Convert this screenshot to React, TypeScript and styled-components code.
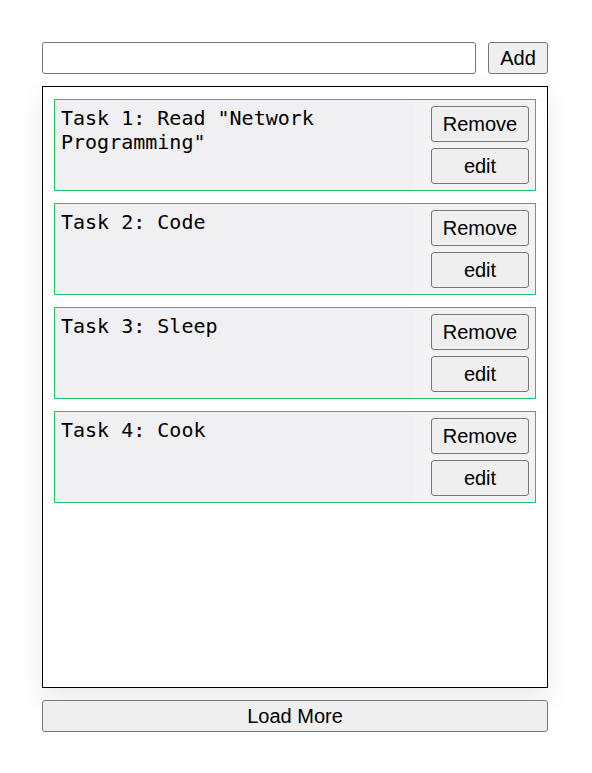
import React, { useState } from "react";
import styled, { createGlobalStyle } from "styled-components";

const GlobalStyle = createGlobalStyle`
  body {
    margin: 0;
    background: #ffffff;
    font-family: "Liberation Sans", Arial, sans-serif;
  }
`;

interface Task {
  id: number;
  title: string;
}

const initialTasks: Task[] = [
  { id: 1, title: 'Task 1: Read "Network Programming"' },
  { id: 2, title: "Task 2: Code" },
  { id: 3, title: "Task 3: Sleep" },
  { id: 4, title: "Task 4: Cook" },
];

const App = () => {
  const [tasks, setTasks] = useState<Task[]>(initialTasks);
  const [value, setValue] = useState("");

  const addTask = () => {
    if (!value.trim()) return;
    setTasks([...tasks, { id: Date.now(), title: value }]);
    setValue("");
  };

  return (
    <Page>
      <GlobalStyle />
      <AddRow>
        <TaskInput value={value} onChange={(e) => setValue(e.target.value)} />
        <Button $width="60px" onClick={addTask}>
          Add
        </Button>
      </AddRow>
      <ListBox>
        {tasks.map((task) => (
          <Card key={task.id}>
            <CardText>{task.title}</CardText>
            <Actions>
              <Button $width="98px" $height="36px" onClick={() => setTasks(tasks.filter((t) => t.id !== task.id))}>
                Remove
              </Button>
              <Button $width="98px" $height="36px">
                edit
              </Button>
            </Actions>
          </Card>
        ))}
      </ListBox>
      <Button $width="100%">Load More</Button>
    </Page>
  );
};

export default App;

const Page = styled.div`
  width: 506px;
  margin-left: 42px;
  padding-top: 42px;
  display: flex;
  flex-direction: column;
  gap: 12px;
`;

const AddRow = styled.div`
  display: flex;
  gap: 12px;
`;

const TaskInput = styled.input`
  flex: 1;
  height: 32px;
  box-sizing: border-box;
  border: 1px solid #767676;
  border-radius: 3px;
  padding: 0 6px;
  font-size: 18px;
  font-family: "Liberation Sans", Arial, sans-serif;
`;

const Button = styled.button<{ $width?: string; $height?: string }>`
  width: ${({ $width }) => $width || "auto"};
  height: ${({ $height }) => $height || "32px"};
  box-sizing: border-box;
  border: 1px solid #767676;
  border-radius: 3px;
  background: #efefef;
  color: #000;
  font-family: "Liberation Sans", Arial, sans-serif;
  font-size: 20px;
  padding: 0;
  cursor: pointer;
`;

const ListBox = styled.div`
  height: 602px;
  box-sizing: border-box;
  border: 1px solid #000;
  padding: 12px 11px;
  display: flex;
  flex-direction: column;
  gap: 12px;
  box-shadow: 0 10px 24px rgba(0, 0, 0, 0.09);
`;

const Card = styled.div`
  display: flex;
  border: 1px solid #22c55e;
  background: #f0f0f2;
`;

const CardText = styled.div`
  flex: 1;
  padding: 6px 0 6px 6px;
  font-family: "DejaVu Sans Mono", monospace;
  font-size: 20px;
  line-height: 24px;
  color: #000;
`;

const Actions = styled.div`
  display: flex;
  flex-direction: column;
  gap: 6px;
  padding: 6px 6px 6px 18px;
  background: #f3f3f5;
`;
